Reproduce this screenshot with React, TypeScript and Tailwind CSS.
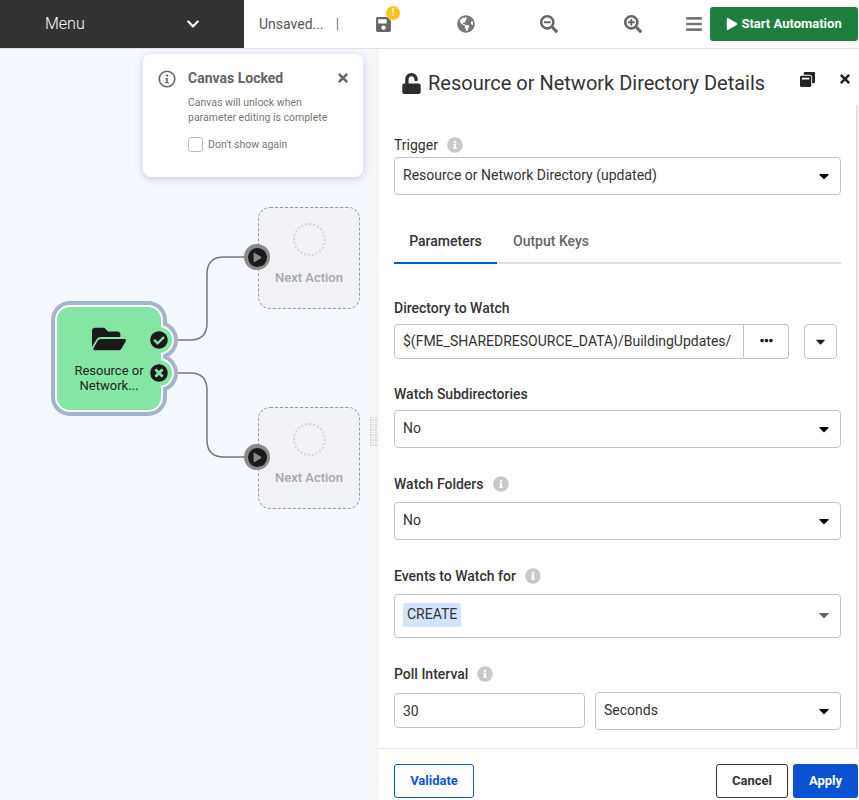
import React from 'react';
import {
  FaCaretDown,
  FaCheckCircle,
  FaChevronDown,
  FaEllipsisH,
  FaFolderOpen,
  FaGlobeAmericas,
  FaBars,
  FaInfoCircle,
  FaPlay,
  FaSave,
  FaSearchMinus,
  FaSearchPlus,
  FaTimes,
  FaTimesCircle,
  FaUnlock,
  FaWindowRestore,
} from 'react-icons/fa';

const FieldLabel = ({ text, info, className }: { text: string; info?: boolean; className: string }) => (
  <div className={`flex h-5 items-center text-sm font-medium text-[#333] ${className}`}>
    {text}
    {info && <FaInfoCircle className="ml-[9px] text-[#c9c9c9]" size={16} />}
  </div>
);

const Select = ({ value, className }: { value: string; className?: string }) => (
  <div
    className={`flex h-[38px] items-center justify-between rounded-[4px] border border-[#c4c4c4] bg-white pl-2 pr-[8px] text-sm text-[#333] ${className ?? ''}`}
  >
    <span className="-mt-[2px]">{value}</span>
    <FaCaretDown className="text-black" size={16} />
  </div>
);

const NextAction = ({ className }: { className: string }) => (
  <div
    className={`absolute flex h-[102px] w-[102px] flex-col items-center rounded-xl border border-dashed border-[#999] bg-[#f1f2f6] ${className}`}
  >
    <div className="mt-[15px] h-[33px] w-[33px] rounded-full border-2 border-dotted border-[#d4d4d4]" />
    <div className="mt-[13px] text-[13px] font-medium leading-[18px] text-[#a8a8a8]">Next Action</div>
  </div>
);

const PlayPort = ({ className }: { className: string }) => (
  <div
    className={`absolute flex h-[26px] w-[26px] items-center justify-center rounded-full bg-[#8a8a8a] ${className}`}
  >
    <div className="flex h-[19px] w-[19px] items-center justify-center rounded-full bg-[#1a1a1a] pl-[1px]">
      <FaPlay className="text-[#8a8a8a]" size={9} />
    </div>
  </div>
);

const NodeShape = () => {
  const layers = [
    { color: '#a3b5c9', grow: 6 },
    { color: '#ffffff', grow: 2 },
    { color: '#84e5a4', grow: 0 },
  ];
  return (
    <svg className="absolute left-0 top-[-49px]" width="368" height="800">
      {/* connectors */}
      <path d="M172 340H190Q207 340 207 323V274Q207 257 224 257H246" fill="none" stroke="#777" strokeWidth="1.5" />
      <path d="M172 373H190Q207 373 207 390V440Q207 457 224 457H246" fill="none" stroke="#777" strokeWidth="1.5" />
      {layers.map((l) => (
        <g key={l.color} fill={l.color}>
          <rect
            x={57 - l.grow}
            y={307 - l.grow}
            width={104 + l.grow * 2}
            height={103 + l.grow * 2}
            rx={13 + l.grow}
          />
          <circle cx="159" cy="340" r={13 + l.grow} />
          <circle cx="159" cy="373" r={13 + l.grow} />
        </g>
      ))}
    </svg>
  );
};

export default function App() {
  return (
    <div className="flex h-[800px] w-[859px] flex-col overflow-hidden bg-white font-['Roboto',sans-serif]">
      {/* Top bar */}
      <header className="flex h-[49px] shrink-0 items-center border-b border-[#e2e2e2] bg-white">
        <div className="flex h-12 w-[244px] items-center justify-between bg-[#333] pl-[45px] pr-[44px] text-white">
          <span className="text-base font-light">Menu</span>
          <FaChevronDown size={14} />
        </div>
        <span className="ml-[15px] text-sm text-[#555]">Unsaved...</span>
        <span className="ml-[12px] text-sm text-[#777]">|</span>
        <div className="relative ml-[36px]">
          <FaSave className="text-[#666]" size={17} />
          <span className="absolute -right-[8px] -top-[10px] flex h-[14px] w-[14px] items-center justify-center rounded-full bg-[#fcc419] text-[10px] font-bold leading-none text-white">
            !
          </span>
        </div>
        <FaGlobeAmericas className="ml-[65px] text-[#777]" size={18} />
        <FaSearchMinus className="ml-[65px] text-[#666]" size={18} />
        <FaSearchPlus className="ml-[66px] text-[#666]" size={18} />
        <FaBars className="ml-[43px] text-[#777]" size={18} />
        <button className="ml-[7px] flex h-[34px] w-[148px] items-center justify-center gap-[3px] rounded-[3px] bg-[#1e7e3e] text-[13px] font-bold text-white">
          <FaPlay size={12} />
          Start Automation
        </button>
      </header>

      <div className="flex min-h-0 flex-1">
        {/* Canvas */}
        <div className="relative w-[368px] shrink-0 bg-[#f6f8ff]">
          <NodeShape />
          <FaFolderOpen className="absolute left-[92px] top-[273px] text-[#1a1a1a]" size={34} />
          <FaCheckCircle className="absolute left-[150px] top-[282px] text-[#1a1a1a]" size={18} />
          <FaTimesCircle className="absolute left-[150px] top-[315px] text-[#1a1a1a]" size={18} />
          <div className="absolute left-[62px] top-[314px] w-[94px] text-center text-[13px] leading-[15px] text-[#222]">
            Resource or
            <br />
            Network...
          </div>

          <NextAction className="left-[258px] top-[158px]" />
          <NextAction className="left-[258px] top-[358px]" />
          <PlayPort className="left-[244px] top-[195px]" />
          <PlayPort className="left-[244px] top-[395px]" />

          {/* Canvas locked popover */}
          <div className="absolute left-[143px] top-[5px] h-[123px] w-[220px] rounded-lg bg-white shadow-[0_2px_10px_rgba(0,0,0,0.18)]">
            <div className="flex pl-[15px] pt-[15px]">
              <svg width="18" height="18" viewBox="0 0 18 18" className="mr-[12px] mt-[1px] text-[#666]">
                <circle cx="9" cy="9" r="7.8" fill="none" stroke="currentColor" strokeWidth="1.6" />
                <circle cx="9" cy="5.6" r="1.2" fill="currentColor" />
                <path d="M7.5 8H9.8V12H10.8V13.2H7.2V12H8.2V9.2H7.5Z" fill="currentColor" />
              </svg>
              <div className="w-[148px]">
                <div className="text-sm font-bold leading-[18px] text-[#666]">Canvas Locked</div>
                <div className="mt-[8px] text-[10.5px] leading-[15px] text-[#777]">
                  Canvas will unlock when
                  <br />
                  parameter editing is complete
                </div>
                <div className="mt-[12px] flex items-center gap-[5px] text-[10.5px] text-[#777]">
                  <span className="h-[15px] w-[15px] rounded-[3px] border border-[#bbb] bg-white" />
                  Don't show again
                </div>
              </div>
              <FaTimes className="mt-[2px] text-[#666]" size={14} />
            </div>
          </div>
        </div>

        {/* Splitter */}
        <div className="flex w-[11px] shrink-0 items-center justify-center bg-[#f6f6f6]">
          <div className="mt-[13px] grid grid-cols-3 gap-[1px]">
            {Array.from({ length: 36 }).map((_, i) => (
              <span key={i} className="h-[1.5px] w-[1.5px] bg-[#d6d6d6]" />
            ))}
          </div>
        </div>

        {/* Details panel */}
        <div className="flex min-w-0 flex-1 flex-col bg-white">
          <div className="flex h-[56px] shrink-0 items-start pl-[22px] pr-[7px]">
            <FaUnlock className="mt-[24px] text-[#2d2d2d]" size={21} />
            <h1 className="ml-[6px] mt-[22px] text-xl leading-6 text-[#333]">
              Resource or Network Directory Details
            </h1>
            <FaWindowRestore className="ml-auto mt-[23px] text-[#222]" size={15} />
            <FaTimes className="ml-[23px] mt-[23px] text-[#222]" size={14} />
          </div>

          <div className="flex min-h-0 flex-1">
            <div className="w-[462px] shrink-0 pl-[15px]">
              <FieldLabel text="Trigger" info className="mt-[30px] font-normal" />
              <Select value="Resource or Network Directory (updated)" className="mt-[2px]" />

              <div className="mt-[25px] flex h-[44px] border-b-2 border-[#e0e0e0] text-sm font-medium">
                <div className="-mb-[2px] flex w-[103px] items-center justify-center border-b-2 border-[#0b57d0] text-[#333]">
                  Parameters
                </div>
                <div className="ml-[16px] flex items-center text-[#666]">Output Keys</div>
              </div>

              <FieldLabel text="Directory to Watch" className="mt-[34px]" />
              <div className="mt-[6px] flex h-[35px] text-sm text-[#333]">
                <div className="flex w-[350px] items-center rounded-l-[4px] border border-[#c4c4c4] pb-[1px] pl-2">
                  $(FME_SHAREDRESOURCE_DATA)/BuildingUpdates/
                </div>
                <div className="flex w-[45px] items-center justify-center rounded-r-[4px] border border-l-0 border-[#c4c4c4] pb-[2px]">
                  <FaEllipsisH className="text-[#222]" size={13} />
                </div>
                <div className="ml-[15px] flex w-[33px] items-center justify-center rounded-[4px] border border-[#c4c4c4]">
                  <FaCaretDown className="text-[#222]" size={15} />
                </div>
              </div>

              <FieldLabel text="Watch Subdirectories" className="mt-[25px]" />
              <Select value="No" className="mt-[6px]" />

              <FieldLabel text="Watch Folders" info className="mt-[26px]" />
              <Select value="No" className="mt-[8px]" />

              <FieldLabel text="Events to Watch for" info className="mt-[26px]" />
              <div className="mt-[8px] flex h-[44px] items-start justify-between rounded-[4px] border border-[#c4c4c4] pl-2 pr-[8px] pt-[8px] text-sm text-[#333]">
                <span className="flex h-6 items-center rounded-[3px] bg-[#d3e3fd] px-1 pb-[2px]">CREATE</span>
                <FaCaretDown className="mt-[4px] text-[#666]" size={16} />
              </div>

              <FieldLabel text="Poll Interval" info className="mt-[26px]" />
              <div className="mt-[8px] flex items-start gap-[10px] text-sm text-[#333]">
                <div className="mt-[1px] flex h-[35px] w-[191px] items-center rounded-[4px] border border-[#c4c4c4] pl-2">
                  30
                </div>
                <Select value="Seconds" className="flex-1" />
              </div>
            </div>
            <div className="ml-auto mr-[1px] w-[2px] bg-[#e3e3e3]" />
          </div>

          {/* Footer */}
          <div className="flex h-[52px] shrink-0 items-start border-t border-[#e4e4e4] pl-[15px] pr-[1px] pt-[15px] text-[13px] font-bold">
            <button className="h-[34px] w-[80px] rounded-[3px] border border-[#0b57d0] text-[#0b57d0]">Validate</button>
            <button className="ml-auto h-[34px] w-[72px] rounded-[3px] border border-[#333] text-[#333]">Cancel</button>
            <button className="ml-[5px] h-[34px] w-[65px] rounded-[3px] bg-[#0a52d1] text-white">Apply</button>
          </div>
        </div>
      </div>
    </div>
  );
}
